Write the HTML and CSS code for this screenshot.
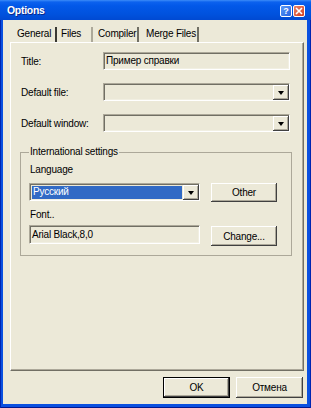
FILE: index.html
```html
<!DOCTYPE html>
<html>
<head>
<meta charset="utf-8">
<link rel="stylesheet" href="styles.css">
</head>
<body>
<div class="window">
  <div class="titlebar">
    <span class="title">Options</span>
    <div class="caption-buttons">
      <span class="cap-btn help">?</span>
      <span class="cap-btn close"><svg width="8" height="8" viewBox="0 0 8 8"><path d="M1 1L7 7M7 1L1 7" stroke="#fff" stroke-width="1.6"/></svg></span>
    </div>
  </div>
  <div class="client">
    <div class="tabs">
      <span class="tab tab-general">General</span>
      <span class="tab tab-files">Files</span>
      <span class="tab tab-compiler">Compiler</span>
      <span class="tab tab-merge">Merge Files</span>
    </div>
    <div class="panel">
      <div class="form-row">
        <span class="label">Title:</span>
        <div class="edit">Пример справки</div>
      </div>
      <div class="form-row">
        <span class="label">Default file:</span>
        <div class="combo"><span class="combo-text"></span><span class="drop"><i class="arrow"></i></span></div>
      </div>
      <div class="form-row">
        <span class="label">Default window:</span>
        <div class="combo"><span class="combo-text"></span><span class="drop"><i class="arrow"></i></span></div>
      </div>
      <fieldset class="group">
        <legend>International settings</legend>
        <div class="field-label">Language</div>
        <div class="group-row">
          <div class="combo combo-lang"><span class="combo-text selected">Русский</span><span class="drop"><i class="arrow"></i></span></div>
          <button class="btn btn-other">Other</button>
        </div>
        <div class="field-label field-label-font">Font..</div>
        <div class="group-row">
          <div class="edit edit-font">Arial Black,8,0</div>
          <button class="btn btn-change">Change...</button>
        </div>
      </fieldset>
    </div>
    <div class="actions">
      <button class="btn btn-default">OK</button>
      <button class="btn">Отмена</button>
    </div>
  </div>
</div>
</body>
</html>
```
FILE: styles.css
```css
* { box-sizing: border-box; }
html, body { margin: 0; padding: 0; }
body {
  width: 311px;
  height: 408px;
  overflow: hidden;
  font-family: "Liberation Sans", Arial, sans-serif;
  font-size: 10px;
  letter-spacing: -0.2px;
  color: #000;
  background: #0748DC;
}
.window {
  width: 311px;
  height: 408px;
  display: flex;
  flex-direction: column;
  background: #0A50E0;
  box-shadow: inset 1px 0 #0025B0, inset -1px 0 #0025B0, inset 0 -1px #00168E;
}
.titlebar {
  height: 20px;
  flex: none;
  display: flex;
  align-items: center;
  justify-content: space-between;
  padding: 0 6px 0 7px;
  background: linear-gradient(to bottom, #3C8CF8 0, #0C62EE 2px, #0258E8 6px, #0052DE 14px, #0049D2 20px);
}
.title {
  color: #fff;
  font-weight: bold;
  font-size: 10.5px;
  letter-spacing: -0.3px;
  text-shadow: 1px 1px #0A2A8A;
}
.caption-buttons {
  display: flex;
  gap: 1px;
  margin-top: 1px;
}
.cap-btn {
  width: 12px;
  height: 12px;
  border: 1px solid #fff;
  border-radius: 2px;
  display: flex;
  align-items: center;
  justify-content: center;
  color: #fff;
  font-weight: bold;
  font-size: 9px;
  letter-spacing: 0;
}
.help { background: linear-gradient(135deg, #5C9BF8, #2462E0); }
.close { background: linear-gradient(135deg, #E8826A, #D3401E); }
.client {
  flex: 1;
  margin: 0 4px 4px 3px;
  background: #ECE9D8;
  padding: 7px 3px 6px 7px;
  display: flex;
  flex-direction: column;
}
.tabs {
  display: flex;
  height: 15px;
  flex: none;
}
.tab {
  height: 15px;
  line-height: 14px;
  border-right: 2px solid #716F64;
  white-space: nowrap;
}
.tab-general { width: 47px; padding-left: 7px; border-right-color: #3A3A34; }
.tab-files { width: 36px; padding-left: 4px; border-right-color: #ACA899; }
.tab-compiler { width: 46px; padding-left: 5px; }
.tab-merge { width: 60px; padding-left: 7px; }
.panel {
  height: 329px;
  flex: none;
  border: 1px solid;
  border-color: #fff #716F64 #716F64 #fff;
  box-shadow: inset -1px -1px #ACA899;
  padding: 9px 11px 0 9px;
}
.form-row {
  display: grid;
  grid-template-columns: 83px 187px;
  height: 18px;
  align-items: center;
  margin-bottom: 13px;
}
.label { padding-left: 1px; }
.edit {
  height: 18px;
  border: 1px solid;
  border-color: #ACA899 #fff #fff #ACA899;
  box-shadow: inset 1px 1px #716F64, inset -1px -1px #F1EFE2;
  padding-left: 2px;
  line-height: 16px;
  white-space: nowrap;
  overflow: hidden;
}
.combo {
  height: 18px;
  border: 1px solid;
  border-color: #ACA899 #fff #fff #ACA899;
  box-shadow: inset 1px 1px #716F64, inset -1px -1px #F1EFE2;
  padding: 1px 0 0 1px;
  display: flex;
}
.combo-text { flex: 1; }
.drop {
  width: 16px;
  height: 15px;
  flex: none;
  background: #ECE9D8;
  box-shadow: inset -1px -1px #404040, inset 1px 1px #fff, inset -2px -2px #ACA899;
  display: flex;
  align-items: center;
  justify-content: center;
}
.arrow {
  display: block;
  width: 0;
  height: 0;
  border-left: 3.5px solid transparent;
  border-right: 3.5px solid transparent;
  border-top: 4px solid #000;
  margin-left: -1px;
}
.group {
  margin: 11px 0 0 0;
  border: 1px solid #ACA899;
  padding: 0 8px 9px 8px;
  min-width: 0;
}
.group legend {
  padding: 0 1px;
  line-height: 14px;
}
.field-label {
  line-height: 12px;
  margin-top: 5px;
  padding-left: 1px;
}
.field-label-font { margin-top: 7px; }
.group-row {
  display: grid;
  grid-template-columns: 171px 66px;
  column-gap: 11px;
  align-items: start;
  margin-top: 7px;
}
.field-label-font + .group-row { margin-top: 4px; }
.combo-lang { height: 18px; }
.selected {
  background: #316AC5;
  color: #fff;
  margin: 1px 1px 1px 1px;
  padding-left: 1px;
  line-height: 12px;
}
.combo-lang .drop { height: 15px; }
.edit-font { height: 19px; line-height: 17px; }
.btn {
  font: inherit;
  letter-spacing: inherit;
  color: #000;
  background: #ECE9D8;
  border: none;
  padding: 0;
  height: 19px;
  box-shadow: inset -1px -1px #404040, inset 1px 1px #fff, inset -2px -2px #ACA899;
  text-align: center;
}
.btn-change { height: 20px; margin-top: 1px; }
.actions {
  display: flex;
  justify-content: flex-end;
  gap: 6px;
  margin-top: 6px;
  margin-right: 1px;
}
.actions .btn { width: 67px; height: 21px; }
.actions .btn-default {
  border: 1px solid #000;
  box-shadow: inset -1px -1px #404040, inset 1px 1px #fff, inset -2px -2px #ACA899;
}
```
